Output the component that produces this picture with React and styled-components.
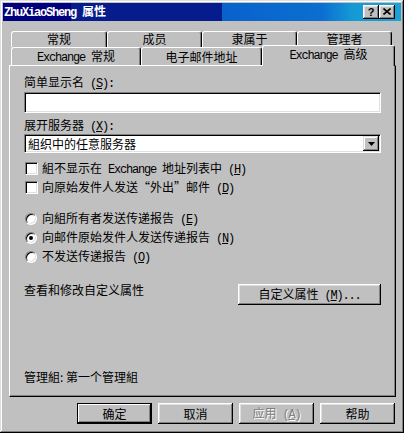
import React from 'react';
import styled, { createGlobalStyle } from 'styled-components';

const Global = createGlobalStyle`
  html, body { margin: 0; padding: 0; background: #c0c0c0; }
  body {
    font-family: "Noto Sans CJK SC", "Noto Sans", sans-serif;
    font-size: 12px;
    line-height: 14px;
    color: #000;
  }
  * { box-sizing: border-box; }
`;

const Win = styled.div`
  width: 404px;
  height: 433px;
  padding: 3px;
  background: #c0c0c0;
  box-shadow: inset -1px -1px #000, inset 1px 1px #dfdfdf,
    inset -2px -2px #808080, inset 2px 2px #fff;
  display: flex;
  flex-direction: column;
`;

const TitleBar = styled.div`
  height: 18px;
  flex: none;
  display: flex;
  align-items: center;
  padding: 0 6px 0 1px;
  color: #fff;
  background: linear-gradient(
    to right,
    #00007e 0%,
    #00007e 17%,
    #061c8c 17%,
    #061c8c 55%,
    #0862cc 55%,
    #0b6ed0 80%,
    #169ad6 88%,
    #1aa2d8 100%
  );
`;

const TitleText = styled.div`
  flex: 1;
  line-height: 18px;
  white-space: pre;
  font-weight: bold;
`;

const Lat = styled.span`
  font-family: "Liberation Mono", "DejaVu Sans Mono", monospace;
  font-size: 12px;
  letter-spacing: -1.2px;
  white-space: pre;
`;

const TitleBtns = styled.div`
  display: flex;
`;

const TitleBtn = styled.div`
  width: 16px;
  height: 14px;
  background: #c0c0c0;
  color: #000;
  display: flex;
  align-items: center;
  justify-content: center;
  box-shadow: inset -1px -1px #000, inset 1px 1px #fff,
    inset -2px -2px #808080, inset 2px 2px #dfdfdf;
  font-family: "Liberation Sans", Arial, sans-serif;
  font-weight: bold;
  font-size: 11px;
  line-height: 14px;
  padding-bottom: 1px;
`;

const Body = styled.div`
  flex: 1;
  display: flex;
  flex-direction: column;
  padding: 10px 5px 0 6px;
`;

const TabStrip = styled.div`
  display: flex;
  flex-direction: column;
  padding-left: 2px;
`;

const TabRow = styled.div`
  display: flex;
  align-items: flex-start;
  height: ${p => p.$h}px;
`;

const Tab = styled.div`
  flex: none;
  width: ${p => p.$w}px;
  height: ${p => (p.$active ? 21 : p.$h)}px;
  margin-top: ${p => (p.$active ? -2 : 0)}px;
  position: relative;
  z-index: ${p => (p.$active ? 1 : 0)};
  display: flex;
  align-items: center;
  justify-content: center;
  background: #c0c0c0;
  border-top: 1px solid #fff;
  border-left: 1px solid #fff;
  border-right: 1px solid #000;
  border-radius: 3px 3px 0 0;
  box-shadow: inset -1px 0 #808080;
  white-space: nowrap;
  line-height: 12px;
  padding-bottom: ${p => p.$pb || 0}px;
`;

const Panel = styled.div`
  flex: none;
  height: 332px;
  border: 1px solid;
  border-color: #fff #000 #000 #fff;
  box-shadow: inset -1px -1px #808080;
  padding: 9px 14px 12px 14px;
  display: flex;
  flex-direction: column;
`;

const Label = styled.div`
  height: 14px;
  margin-top: ${p => p.$mt || 0}px;
  white-space: nowrap;
`;

const Sunken = styled.div`
  border: 1px solid;
  border-color: #808080 #fff #fff #808080;
  box-shadow: inset 1px 1px #000, inset -1px -1px #dfdfdf;
  background: #fff;
`;

const TextInput = styled(Sunken)`
  height: 21px;
  margin-top: ${p => p.$mt || 0}px;
`;

const Select = styled(Sunken)`
  height: 19px;
  margin-top: ${p => p.$mt || 0}px;
  display: flex;
  align-items: center;
  padding: 1px;
`;

const SelectText = styled.div`
  flex: 1;
  padding-left: 2px;
  line-height: 15px;
  white-space: nowrap;
`;

const DropBtn = styled.div`
  width: 16px;
  height: 15px;
  background: #c0c0c0;
  display: flex;
  align-items: center;
  justify-content: center;
  box-shadow: inset -1px -1px #000, inset 1px 1px #dfdfdf,
    inset -2px -2px #808080, inset 2px 2px #fff;
`;

const Group = styled.div`
  display: flex;
  flex-direction: column;
  margin-top: ${p => p.$mt || 0}px;
`;

const OptRow = styled.div`
  height: 19px;
  display: flex;
  align-items: center;
  padding-left: 1px;
  gap: ${p => p.$gap}px;
  white-space: nowrap;
`;

const CheckBox = styled(Sunken)`
  width: 13px;
  height: 13px;
  flex: none;
`;

const Radio = styled.span`
  width: 12px;
  height: 12px;
  flex: none;
  border-radius: 50%;
  border: 1px solid;
  border-color: #808080 #fff #fff #808080;
  box-shadow: inset 1px 1px #000, inset -1px -1px #dfdfdf;
  background: #fff;
  display: flex;
  align-items: center;
  justify-content: center;
  &::after {
    content: "";
    width: 4px;
    height: 4px;
    border-radius: 50%;
    background: ${p => (p.$on ? '#000' : 'transparent')};
  }
`;

const CustomRow = styled.div`
  display: flex;
  justify-content: space-between;
  align-items: flex-start;
  margin-top: 17px;
`;

const Button = styled.div`
  width: ${p => p.$w}px;
  height: 21px;
  flex: none;
  display: flex;
  align-items: center;
  justify-content: center;
  background: #c0c0c0;
  white-space: nowrap;
  color: ${p => (p.$disabled ? '#808080' : '#000')};
  text-shadow: ${p => (p.$disabled ? '1px 1px #fff' : 'none')};
  box-shadow: ${p =>
    p.$default
      ? 'inset 0 0 0 1px #000, inset -2px -2px #000, inset 2px 2px #fff, inset -3px -3px #808080'
      : 'inset -1px -1px #000, inset 1px 1px #fff, inset -2px -2px #808080, inset 2px 2px #dfdfdf'};
`;

const CustomButton = styled(Button)`
  margin-top: 1px;
`;

const Footer = styled.div`
  margin-top: auto;
  height: 14px;
  white-space: nowrap;
`;

const ButtonRow = styled.div`
  display: flex;
  justify-content: flex-end;
  gap: 6px;
  margin-top: 6px;
  padding-right: 1px;
`;

const Mn = ({ k, tail = '' }) => (
  <Lat>
    {' '}(<u>{k}</u>){tail}
  </Lat>
);

export default function App() {
  return (
    <>
      <Global />
      <Win>
        <TitleBar>
          <TitleText>
            <Lat>ZhuXiaoSheng </Lat>属性
          </TitleText>
          <TitleBtns>
            <TitleBtn>?</TitleBtn>
            <TitleBtn>
              <svg width="8" height="7" viewBox="0 0 8 7">
                <path d="M0.5 0.5 L7.5 6.5 M7.5 0.5 L0.5 6.5" stroke="#000" strokeWidth="1.6" fill="none" />
              </svg>
            </TitleBtn>
          </TitleBtns>
        </TitleBar>
        <Body>
          <TabStrip>
            <TabRow $h={16}>
              <Tab $w={96} $h={16} $pb={2}>常规</Tab>
              <Tab $w={95} $h={16} $pb={2}>成员</Tab>
              <Tab $w={95} $h={16} $pb={2}>隶属于</Tab>
              <Tab $w={95} $h={16} $pb={2}>管理者</Tab>
            </TabRow>
            <TabRow $h={18}>
              <Tab $w={130} $h={18}>
                <span>
                  <Lat>Exchange </Lat>常规
                </span>
              </Tab>
              <Tab $w={121} $h={18}>电子邮件地址</Tab>
              <Tab $w={133} $h={18} $pb={2} $active>
                <span>
                  <Lat>Exchange </Lat>高级
                </span>
              </Tab>
            </TabRow>
          </TabStrip>
          <Panel>
            <Label>
              简单显示名<Mn k="S" tail=":" />
            </Label>
            <TextInput $mt={3} />
            <Label $mt={5}>
              展开服务器<Mn k="X" tail=":" />
            </Label>
            <Select $mt={2}>
              <SelectText>組织中的任意服务器</SelectText>
              <DropBtn>
                <svg width="7" height="4" viewBox="0 0 7 4">
                  <path d="M0 0 H7 L3.5 4 Z" fill="#000" />
                </svg>
              </DropBtn>
            </Select>
            <Group $mt={6}>
              <OptRow $gap={4}>
                <CheckBox />
                <span>
                  組不显示在<Lat> Exchange </Lat>地址列表中<Mn k="H" />
                </span>
              </OptRow>
              <OptRow $gap={4}>
                <CheckBox />
                <span>
                  向原始发件人发送“外出”邮件<Mn k="D" />
                </span>
              </OptRow>
            </Group>
            <Group $mt={12}>
              <OptRow $gap={5}>
                <Radio />
                <span>
                  向組所有者发送传递报告<Mn k="E" />
                </span>
              </OptRow>
              <OptRow $gap={5}>
                <Radio $on />
                <span>
                  向邮件原始发件人发送传递报告<Mn k="N" />
                </span>
              </OptRow>
              <OptRow $gap={5}>
                <Radio />
                <span>
                  不发送传递报告<Mn k="O" />
                </span>
              </OptRow>
            </Group>
            <CustomRow>
              <span>查看和修改自定义属性</span>
              <CustomButton $w={143}>
                <span>
                  自定义属性<Mn k="M" tail="..." />
                </span>
              </CustomButton>
            </CustomRow>
            <Footer>管理組: 第一个管理組</Footer>
          </Panel>
          <ButtonRow>
            <Button $w={75} $default>确定</Button>
            <Button $w={75}>取消</Button>
            <Button $w={75} $disabled>
              <span>
                应用<Mn k="A" />
              </span>
            </Button>
            <Button $w={75}>帮助</Button>
          </ButtonRow>
        </Body>
      </Win>
    </>
  );
}
